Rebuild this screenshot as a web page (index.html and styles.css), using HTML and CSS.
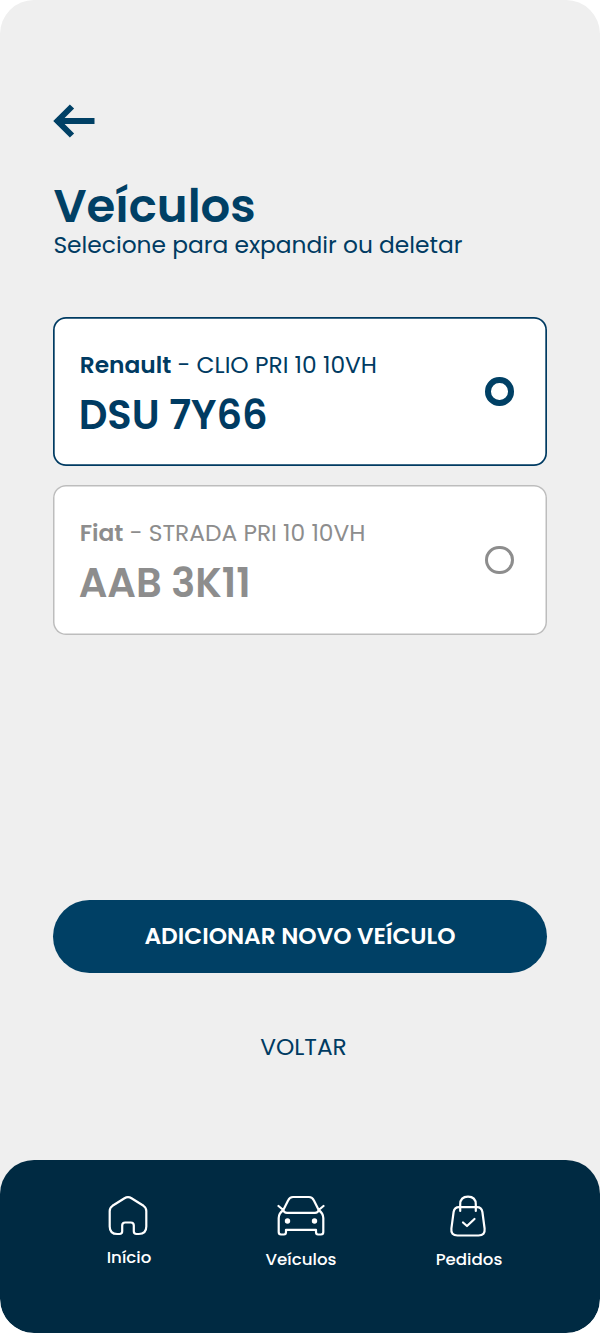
FILE: index.html
```html
<!DOCTYPE html>
<html lang="pt-BR">
<head>
<meta charset="utf-8">
<title>Veículos</title>
<link rel="stylesheet" href="styles.css">
</head>
<body>
<div class="screen">
  <main class="content">
    <a class="back" aria-label="Voltar"><svg width="42" height="34" viewBox="0 0 42 34"><path d="M19 2.500L4.500 17L19 31.500M4.500 17H41.500" fill="none" stroke="#004065" stroke-width="6"/></svg></a>
    <h1 class="title">Veículos</h1>
    <p class="subtitle">Selecione para expandir ou deletar</p>
    <section class="cards">
      <article class="card card-selected">
        <div class="info">
          <p class="model"><b>Renault</b> - CLIO PRI 10 10VH</p>
          <p class="plate">DSU 7Y66</p>
        </div>
        <span class="radio"></span>
      </article>
      <article class="card">
        <div class="info">
          <p class="model"><b>Fiat</b> - STRADA PRI 10 10VH</p>
          <p class="plate">AAB 3K11</p>
        </div>
        <span class="radio"></span>
      </article>
    </section>
    <button class="primary">ADICIONAR NOVO VEÍCULO</button>
    <a class="secondary">VOLTAR</a>
  </main>
  <nav class="nav">
    <a class="item item-home">
      <svg width="42" height="42" viewBox="0 0 42 42"><path d="M17.500 3.200Q21 1 24.500 3.200L36.500 10.800Q39.300 12.700 39.300 16V31.500Q39.300 39 31.800 39H29.500Q26.800 39 26.800 36.300V30.500Q26.800 27.500 23.800 27.500H18.200Q15.200 27.500 15.200 30.500V36.300Q15.200 39 12.500 39H10.200Q2.700 39 2.700 31.500V16Q2.700 12.700 5.500 10.800Z"/></svg>
      <span>Início</span>
    </a>
    <a class="item item-cars">
      <svg width="48" height="42" viewBox="0 0 48 42"><path d="M1.500 11L6.300 15M46.500 11L41.700 15M6.300 15L11.200 5.200Q12.600 2 16 2H32Q35.400 2 36.800 5.200L41.700 15M6.300 15Q7 17.800 10 17.800H38Q41 17.800 41.700 15M6.300 15Q1.700 18.500 1.700 23V37Q1.700 39.500 4 39.500H7Q9 39.500 9 37V34.800H39V37Q39 39.500 41 39.500H44Q46.300 39.500 46.300 37V23Q46.300 18.500 41.700 15"/><circle class="lamp" cx="10.500" cy="26" r="2.700"/><circle class="lamp" cx="37.500" cy="26" r="2.700"/></svg>
      <span>Veículos</span>
    </a>
    <a class="item item-orders">
      <svg width="38" height="44" viewBox="0 0 38 44"><path d="M11.200 16V9.500Q11.200 1.700 19 1.700Q26.800 1.700 26.800 9.500V16M10 12.200H28Q32.600 12.200 33.400 17L35.600 33.500Q36.400 40.500 29.500 40.500H8.500Q1.600 40.500 2.400 33.500L4.600 17Q5.400 12.200 10 12.200Z"/><path d="M14 27.500L18 31L25.500 24"/></svg>
      <span>Pedidos</span>
    </a>
  </nav>
</div>
</body>
</html>
```
FILE: styles.css
```css
* { box-sizing: border-box; }
body {
  margin: 0;
  background: #fff;
  color: #003b62;
  font-family: Poppins, Inter, "Open Sans", sans-serif;
}
h1, p { margin: 0; white-space: nowrap; }
.screen {
  display: flex;
  flex-direction: column;
  width: 600px;
  height: 1333px;
  border-radius: 34px;
  background: #efefef;
  overflow: hidden;
}
.content {
  display: flex;
  flex-direction: column;
  height: 1159.500px;
  padding: 104px 53.400px 0;
}
.back { display: block; height: 34px; }
.back svg { display: block; margin-left: -0.900px; }
.title { margin-top: 43.500px; font-size: 46.600px; line-height: 47px; font-weight: 600; color: #004065; }
.subtitle { margin-top: 3.500px; font-size: 23.330px; line-height: 27px; }
.cards { display: flex; flex-direction: column; gap: 19px; margin-top: 58px; }
.card {
  display: flex;
  align-items: center;
  justify-content: space-between;
  height: 149.400px;
  padding: 0 33px 0 26.300px;
  border-radius: 13px;
  background: #fff;
  box-shadow: inset 0 0 0 1.500px #bdbdbd;
  color: #8d8d8d;
}
.card-selected { box-shadow: inset 0 0 0 1.700px #003b62; color: #003b62; }
.model { font-size: 23.330px; line-height: 30px; font-weight: 400; }
.model b { font-weight: 600; }
.plate { margin-top: 10px; margin-left: -1px; font-size: 40px; line-height: 50px; font-weight: 600; }
.info { padding-top: 6px; }
.radio { width: 28.500px; height: 28.500px; border: 3px solid #8d8d8d; border-radius: 50%; }
.card-selected .radio { border: 6.500px solid #004065; }
.primary {
  height: 73.500px;
  margin-top: 265px;
  padding: 0 0 1.500px;
  border: 0;
  border-radius: 37px;
  background: #004065;
  color: #fff;
  font: inherit;
  font-size: 23.300px;
  font-weight: 600;
}
.secondary { margin-top: 58.500px; padding-left: 7px; font-size: 23.300px; line-height: 30px; text-align: center; }
.nav {
  display: flex;
  flex: 1;
  padding: 35px 0 0 79px;
  border-radius: 34px;
  background: #002a42;
  color: #fff;
}
.item { display: flex; flex-direction: column; align-items: center; width: 100px; font-size: 16.650px; line-height: 22px; font-weight: 500; }
.item svg { display: block; fill: none; stroke: #fff; stroke-width: 2.200; stroke-linecap: round; stroke-linejoin: round; }
.item .lamp { fill: #fff; stroke: none; }
.item-home svg { margin-left: -1.500px; }
.item-home span { margin-top: 10px; }
.item-cars { margin: 0 68px 0 72px; }
.item-cars svg { margin-left: -1px; }
.item-cars span { margin-top: 12px; }
.item-orders svg { margin-left: -2px; }
.item-orders span { margin-top: 10px; }
```
